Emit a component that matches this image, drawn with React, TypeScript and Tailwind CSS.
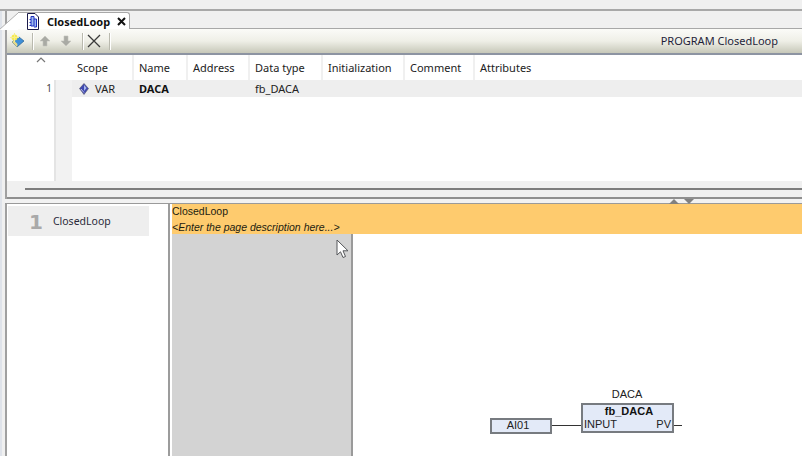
const ui = "font-['Noto_Sans','Liberation_Sans',sans-serif]";

const columns = [
  { label: "Scope", width: "w-[62px]" },
  { label: "Name", width: "w-[54px]" },
  { label: "Address", width: "w-[62px]" },
  { label: "Data type", width: "w-[73px]" },
  { label: "Initialization", width: "w-[82px]" },
  { label: "Comment", width: "w-[70px]" },
  { label: "Attributes", width: "flex-1" },
];

function DocIcon() {
  return (
    <svg width="13" height="17" viewBox="0 0 13 17" className="shrink-0">
      <path d="M1.5 .5H9L12.5 4V16.500H1.500Z" fill="#fff" stroke="#1a1a4a" />
      <path d="M5 3.500H8V13H5ZM3.500 6.500H5M3.500 9.500H5M3.500 12.500H5M8 6H10.500V14H8" fill="#9db8ee" stroke="#1c2fc0" strokeWidth="1" />
    </svg>
  );
}

function NewVarIcon() {
  return (
    <svg width="16" height="16" viewBox="0 0 16 16" className="shrink-0">
      <path d="M2 9L9 4L14 8L7 14Z" fill="#3f8fd8" stroke="#28608f" strokeWidth=".7" />
      <path d="M2 9L7 14L7.500 11L4 7.500Z" fill="#e6d98a" />
      <circle cx="4.500" cy="4.500" r="3" fill="#f5e94f" />
      <path d="M4.500 0V9M0 4.500H9" stroke="#f7ef8a" strokeWidth="1" />
    </svg>
  );
}

function ArrowIcon({ down }: { down?: boolean }) {
  return (
    <svg width="12" height="12" viewBox="0 0 12 12" className={down ? "rotate-180" : ""}>
      <path d="M6 1L11 6H8V11H4V6H1Z" fill="#a9aaa4" stroke="#c4c5be" strokeWidth=".6" />
    </svg>
  );
}

function VarIcon() {
  return (
    <svg width="10" height="12" viewBox="0 0 10 12" className="shrink-0">
      <path d="M5 .5L9.500 5.500L5 11.500L.5 5.500Z" fill="#3f48b0" stroke="#55566a" strokeWidth=".6" />
      <path d="M5 2L7.500 5L5 8Z" fill="#a8b8ee" />
      <path d="M2 6L5 9.500" stroke="#d8dcf5" strokeWidth=".8" />
    </svg>
  );
}

function ToolSep() {
  return <div className="w-px h-[17px] bg-[#b9b9ae] border-r border-white box-content" />;
}

function Cursor() {
  return (
    <svg width="14" height="20" viewBox="0 0 14 20" className="absolute left-[336px] top-[239px]">
      <path d="M1 1V16L4.500 12.800L7 18.500L9.500 17.500L7 11.800H12Z" fill="#fff" stroke="#55575a" strokeWidth="1" />
    </svg>
  );
}

function Diagram() {
  return (
    <div className="absolute left-[490px] top-[388px] w-[200px] h-[50px] font-['Liberation_Sans',sans-serif] text-[11px] text-[#222]">
      <div className="absolute left-[91px] top-0 w-[92px] text-center leading-[13px]">DACA</div>
      <div className="absolute left-[91px] top-[15px] w-[93px] h-[30px] bg-[#e3eaf8] border-2 border-[#777b80] flex flex-col">
        <div className="text-center font-bold leading-[13px] text-[#111] pl-[3px]">fb_DACA</div>
        <div className="flex justify-between leading-[13px]">
          <span className="pl-px">INPUT</span>
          <span className="pr-px">PV</span>
        </div>
      </div>
      <div className="absolute left-0 top-[30px] w-[62px] h-[16px] bg-[#e3eaf8] border-2 border-[#777b80] text-center leading-[11px] pr-[6px]">AI01</div>
      <div className="absolute left-[62px] top-[37px] w-[29px] h-px bg-[#333]" />
      <div className="absolute left-[184px] top-[37px] w-[8px] h-px bg-[#333]" />
    </div>
  );
}

export default function App() {
  return (
    <div className={`${ui} relative w-[802px] h-[456px] overflow-hidden bg-white text-[11px] text-[#222] flex`}>
      {/* window edge */}
      <div className="w-[7px] shrink-0 bg-[#f0f0f0] border-l-2 border-l-[#dfe3ea] border-r-2 border-r-[#a0a0a0]" />

      <div className="flex-1 flex flex-col min-w-0">
        <div className="h-[9px] bg-[#f0f0f0] border-b-2 border-[#a8a8a8] -ml-[7px] box-content" />

        {/* tab strip */}
        <div className="h-[17px] bg-[#f0f0f0] border-b border-[#a8a8a8] flex items-end box-content">
          <div className="relative ml-[11px] w-[112px] h-[17px] bg-white border-t border-r border-[#a8a8a8] rounded-tr-[3px] flex items-center gap-[8px] pl-[8px] -mb-px">
            <svg width="19" height="17" viewBox="0 0 19 17" className="absolute -left-[19px] top-0">
              <path d="M0 17L19 0V17Z" fill="#fff" />
              <path d="M0 17L19 0" stroke="#b0b0b0" />
            </svg>
            <DocIcon />
            <span className="font-bold text-[#111] leading-none">ClosedLoop</span>
            <svg width="9" height="9" viewBox="0 0 9 9" className="-ml-[1px]">
              <path d="M1 1L8 8M8 1L1 8" stroke="#111" strokeWidth="2" />
            </svg>
          </div>
        </div>

        {/* toolbar */}
        <div className="h-[24px] bg-gradient-to-b from-[#fbfbf8] via-[#efefe7] to-[#c7c8b9] border-b-2 border-[#8d94a2] flex items-center gap-[6px] pl-[3px] box-content">
          <NewVarIcon />
          <ToolSep />
          <div className="flex gap-[9px] -ml-[1px]">
            <ArrowIcon />
            <ArrowIcon down />
          </div>
          <div className="ml-[4px]"><ToolSep /></div>
          <svg width="14" height="14" viewBox="0 0 14 14" className="-ml-[3px]">
            <path d="M1 1L13 13M13 1L1 13" stroke="#3a3a3a" strokeWidth="1.300" />
          </svg>
          <div className="ml-[2px]"><ToolSep /></div>
          <span className="ml-auto pr-[24px] text-[#1f1f3a]">PROGRAM ClosedLoop</span>
        </div>

        {/* declaration table */}
        <div className="h-[126px] flex">
          <div className="w-[47px] shrink-0 relative pt-[25px]">
            <svg width="10" height="6" viewBox="0 0 10 6" className="absolute left-[29px] top-[2px]">
              <path d="M1 5L5 1L9 5" fill="none" stroke="#777" strokeWidth="1.200" />
            </svg>
            <div className="h-[17px] pr-[2px] text-right text-[10px] leading-[17px] text-[#444]">1</div>
          </div>
          <div className="w-[18px] shrink-0 bg-[#f2f2f2] mt-[25px] border-l-2 border-[#e4e4e4]" />
          <div className="flex-1 flex flex-col">
            <div className="h-[25px] flex">
              {columns.map((c) => (
                <div key={c.label} className={`${c.width} pl-[5px] pt-[4px] border-r-2 border-[#f0f0f0] last:border-r-0 leading-[18px]`}>
                  {c.label}
                </div>
              ))}
            </div>
            <div className="h-[17px] bg-[#eeeeee] flex items-center leading-none">
              <div className="w-[62px] pl-[7px] flex items-center gap-[6px]">
                <VarIcon />
                <span>VAR</span>
              </div>
              <div className="w-[116px] pl-[5px] font-bold text-[#111]">DACA</div>
              <div className="pl-[5px]">fb_DACA</div>
            </div>
          </div>
        </div>

        {/* splitter */}
        <div className="h-[9px] bg-[#f0f0f0] border-b-2 border-[#8f8f8f] flex items-start pl-[18px] pt-[7px] box-content">
          <div className="w-full h-[2px] bg-[#7d7d7d]" />
        </div>
        <div className="relative h-[4px] bg-[#f2f2f2] border-b border-[#9a9a9a] -ml-[2px] box-content">
          <div className="absolute left-[664px] top-0 w-0 h-0 border-x-[5px] border-x-transparent border-b-[5px] border-b-[#808080]" />
          <div className="absolute left-[679px] top-0 w-0 h-0 border-x-[5px] border-x-transparent border-t-[5px] border-t-[#808080]" />
        </div>

        {/* FBD editor */}
        <div className="flex-1 flex min-h-0">
          <div className="w-[161px] shrink-0 border-r-2 border-[#9c9c9c] pt-[2px] box-content">
            <div className="w-[141px] ml-px h-[30px] bg-[#eeeeee] flex items-center gap-[10px] pl-[21px] pt-[1px]">
              <span className="font-['DejaVu_Sans',sans-serif] font-bold text-[20px] leading-none text-[#a9a9a9]">1</span>
              <span className="text-[10.500px] text-[#2a2a3a] mt-[1px]">ClosedLoop</span>
            </div>
          </div>
          <div className="flex-1 flex flex-col min-w-0 ml-[2px]">
            <div className="h-[30px] bg-[#fecb6e] text-[#1c1c10] font-['Liberation_Sans',sans-serif] text-[10.500px]">
              <div className="leading-[15px]">ClosedLoop</div>
              <div className="italic leading-[15px] pt-px">&lt;Enter the page description here...&gt;</div>
            </div>
            <div className="flex-1 w-[181px] bg-[#d3d3d3] border-r-2 border-[#9a9a9a]" />
          </div>
        </div>
      </div>

      <Diagram />
      <Cursor />
    </div>
  );
}
